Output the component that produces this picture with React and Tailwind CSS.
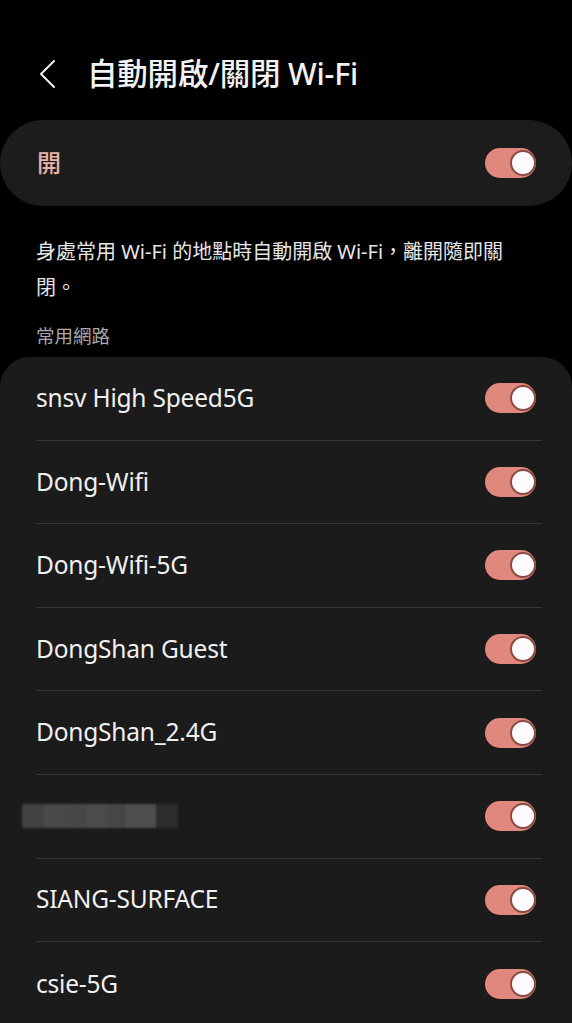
import React from "react";

const networks = [
  "snsv High Speed5G",
  "Dong-Wifi",
  "Dong-Wifi-5G",
  "DongShan Guest",
  "DongShan_2.4G",
  null,
  "SIANG-SURFACE",
  "csie-5G",
];

function Toggle() {
  return (
    <div className="relative h-[30px] w-[51px] shrink-0 rounded-full bg-[#e0887e]">
      <div className="absolute right-0 top-[2px] h-[26px] w-[26px] rounded-full border-[2px] border-[#8a4a42] bg-[#fdfbfb]" />
    </div>
  );
}

// pixelated name, hidden in the screenshot
function Masked() {
  return (
    <div className="-ml-[14px] flex h-[24px] blur-[1px]">
      <div className="w-[22px] bg-[#434343]" />
      <div className="w-[20px] bg-[#4a4a4a]" />
      <div className="w-[22px] bg-[#474747]" />
      <div className="w-[20px] bg-[#4b4b4b]" />
      <div className="w-[20px] bg-[#464646]" />
      <div className="w-[30px] bg-[#4e4e4e]" />
      <div className="w-[22px] bg-[#2c2c2c]" />
    </div>
  );
}

export default function App() {
  return (
    <div
      className="min-h-screen w-[572px] bg-black pt-[50px] text-[#f2f2f2]"
      style={{ fontFamily: '"Noto Sans", "Noto Sans CJK TC", sans-serif' }}
    >
      <div className="flex h-[48px] items-center">
        <svg width="20" height="30" viewBox="0 0 20 30" className="ml-[38px]">
          <path d="M16 2 L3 15 L16 28" fill="none" stroke="#f2f2f2" strokeWidth="2" strokeLinecap="round" strokeLinejoin="round" />
        </svg>
        <h1 className="ml-[29px] text-[30.5px] font-medium tracking-[-0.2px]">自動開啟/關閉 Wi-Fi</h1>
      </div>

      <div className="mt-[22px] flex h-[86px] items-center justify-between rounded-[43px] bg-[#1c1c1c] pl-[37px] pr-[36px]">
        <span className="text-[24px] font-medium text-[#e8b2a6]">開</span>
        <Toggle />
      </div>

      <p className="mt-[28px] pl-[36px] pr-[50px] text-[20px] leading-[36px] text-[#e6e6e6]">
        身處常用 Wi-Fi 的地點時自動開啟 Wi-Fi，離開隨即關閉。
      </p>

      <div className="mt-[18px] pl-[36px] text-[18.5px] leading-[24px] text-[#a9a9a9]">常用網路</div>

      <div className="mt-[9px] rounded-t-[30px] bg-[#1b1b1b] pb-[20px]">
        {networks.map((name, i) => (
          <div key={i} className="mr-[30px] ml-[36px]">
            <div
              className={
                "flex h-[83.6px] items-center justify-between pr-[6px] " +
                (i < networks.length - 1 ? "border-b border-[#363636]" : "")
              }
            >
              {name ? (
                <span className="text-[24.5px] tracking-[-0.2px] text-[#f0f0f0]">{name}</span>
              ) : (
                <Masked />
              )}
              <Toggle />
            </div>
          </div>
        ))}
      </div>
    </div>
  );
}
